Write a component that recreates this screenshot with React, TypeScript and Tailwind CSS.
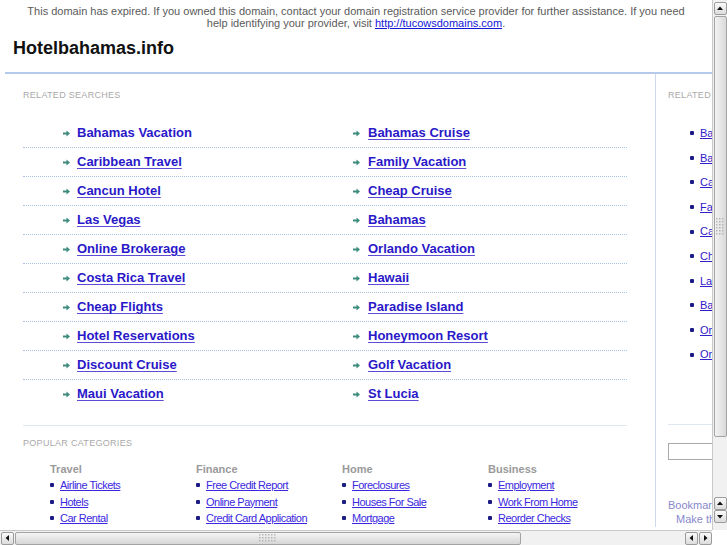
import React from "react";

const leftLinks = [
  "Bahamas Vacation",
  "Caribbean Travel",
  "Cancun Hotel",
  "Las Vegas",
  "Online Brokerage",
  "Costa Rica Travel",
  "Cheap Flights",
  "Hotel Reservations",
  "Discount Cruise",
  "Maui Vacation",
];
const rightLinks = [
  "Bahamas Cruise",
  "Family Vacation",
  "Cheap Cruise",
  "Bahamas",
  "Orlando Vacation",
  "Hawaii",
  "Paradise Island",
  "Honeymoon Resort",
  "Golf Vacation",
  "St Lucia",
];
const sideLinks = [
  "Bahamas Vacation",
  "Bahamas Cruise",
  "Caribbean Travel",
  "Family Vacation",
  "Cancun Hotel",
  "Cheap Cruise",
  "Las Vegas",
  "Bahamas",
  "Online Brokerage",
  "Orlando Vacation",
];
const categories = [
  { title: "Travel", items: ["Airline Tickets", "Hotels", "Car Rental"] },
  { title: "Finance", items: ["Free Credit Report", "Online Payment", "Credit Card Application"] },
  { title: "Home", items: ["Foreclosures", "Houses For Sale", "Mortgage"] },
  { title: "Business", items: ["Employment", "Work From Home", "Reorder Checks"] },
];

function Arrow() {
  return (
    <svg width="7" height="7" viewBox="0 0 7 7" className="shrink-0">
      <path d="M0 2.5h3.5V0.5L7 3.5 3.5 6.5V4.5H0z" fill="#3d8c7e" />
    </svg>
  );
}

function Bullet() {
  return <span className="inline-block w-[4px] h-[4px] rounded-[1px] bg-[#1c1c86] shrink-0" />;
}

function Tri({ dir }: { dir: "up" | "down" | "left" | "right" }) {
  const d =
    dir === "up"
      ? "M1 5L4 1.5 7 5z"
      : dir === "down"
      ? "M1 2L4 5.5 7 2z"
      : dir === "left"
      ? "M5 1L1.5 4 5 7z"
      : "M2 1L5.5 4 2 7z";
  return (
    <svg width="8" height="8" viewBox="0 0 8 8">
      <path d={d} fill="#111" />
    </svg>
  );
}

function Btn({ dir, cls }: { dir: "up" | "down" | "left" | "right"; cls: string }) {
  return (
    <div
      className={`${cls} flex items-center justify-center rounded-[2px] border border-[#9c9c9c] bg-gradient-to-b from-[#fafafa] to-[#dcdcdc]`}
    >
      <Tri dir={dir} />
    </div>
  );
}

function Grip({ vertical }: { vertical: boolean }) {
  const cols = vertical ? 3 : 6;
  const rows = vertical ? 6 : 3;
  const dots = [];
  for (let r = 0; r < rows; r++)
    for (let c = 0; c < cols; c++)
      dots.push(<rect key={`${r}-${c}`} x={c * 3} y={r * 3} width="1.5" height="1.5" fill="#b5b5b5" />);
  return (
    <svg width={cols * 3} height={rows * 3}>
      {dots}
    </svg>
  );
}

function VScroll() {
  return (
    <div className="w-[15px] h-full flex flex-col items-center bg-[#f1f1f1] border-l border-[#c9c9c9]">
      <Btn dir="up" cls="w-[13px] h-[13px] mt-[2px]" />
      <div className="w-[13px] h-[421px] mt-[1px] flex items-center justify-center rounded-[2px] border border-[#a3a3a3] bg-gradient-to-r from-[#f3f3f3] to-[#d9d9d9]">
        <Grip vertical />
      </div>
      <div className="flex-1" />
      <Btn dir="up" cls="w-[13px] h-[13px]" />
      <Btn dir="down" cls="w-[13px] h-[13px]" />
      <div className="h-[7px]" />
    </div>
  );
}

function HScroll() {
  return (
    <div className="flex-1 h-full flex items-center bg-[#f1f1f1] border-t border-[#c9c9c9]">
      <Btn dir="left" cls="w-[13px] h-[13px] ml-[1px]" />
      <div className="w-[506px] h-[13px] ml-[1px] flex items-center justify-center rounded-[2px] border border-[#a3a3a3] bg-gradient-to-b from-[#f5f5f5] to-[#d6d6d6]">
        <Grip vertical={false} />
      </div>
      <div className="flex-1" />
      <Btn dir="left" cls="w-[13px] h-[13px]" />
      <Btn dir="right" cls="w-[13px] h-[13px] ml-[1px]" />
    </div>
  );
}

function RelLink({ text, first }: { text: string; first?: boolean }) {
  return (
    <a
      href="#"
      className={`text-[13px] font-bold text-[#2a18c8] ${
        first ? "no-underline" : "underline decoration-[#5b4bd6] underline-offset-[2px]"
      }`}
    >
      {text}
    </a>
  );
}

export default function App() {
  return (
    <div className="w-[727px] h-[545px] flex flex-col overflow-hidden bg-white font-['Liberation_Sans',Arial,sans-serif]">
      <div className="flex flex-1 min-h-0">
        <div className="flex-1 min-w-0 overflow-hidden">
          <div className="w-[960px]">
            <div className="w-[712px] pt-[5px] text-center text-[11px] leading-[12px] text-[#5a5a5a]">
              This domain has expired. If you owned this domain, contact your domain registration service provider for further assistance. If you need
              <br />
              help identifying your provider, visit{" "}
              <a href="#" className="text-[#1515d8] underline">
                http://tucowsdomains.com
              </a>
              .
            </div>
            <h1 className="mt-[8px] ml-[13px] text-[18px] leading-[22px] font-bold text-[#111]">
              Hotelbahamas.info
            </h1>
            <div className="mt-[13px] ml-[5px] h-[2px] bg-[#b5c9ea]" />
            <div className="flex ml-[5px]">
              <div className="w-[651px] border-r border-[#cdd8ea] pl-[18px] pr-[28px] pt-[16px]">
                <div className="text-[9px] leading-[11px] text-[#a9a9a9] tracking-[0.3px]">RELATED SEARCHES</div>
                <div className="mt-[18px]">
                  {leftLinks.map((l, i) => (
                    <div
                      key={l}
                      className={`grid grid-cols-[290px_1fr] h-[29px] ${
                        i < leftLinks.length - 1 ? "border-b border-dotted border-[#a9c3e6]" : ""
                      }`}
                    >
                      <div className="pl-[40px] flex items-center gap-[7px] h-[28px]">
                        <Arrow />
                        <RelLink text={l} first={i === 0} />
                      </div>
                      <div className="pl-[40px] flex items-center gap-[8px] h-[28px]">
                        <Arrow />
                        <RelLink text={rightLinks[i]} />
                      </div>
                    </div>
                  ))}
                </div>
                <div className="mt-[16px] h-[1px] bg-[#dfe7f3]" />
                <div className="mt-[12px] text-[9px] leading-[11px] text-[#a9a9a9] tracking-[0.3px]">POPULAR CATEGORIES</div>
                <div className="mt-[14px] pl-[27px] flex">
                  {categories.map((c) => (
                    <div key={c.title} className="w-[146px] shrink-0">
                      <div className="text-[11px] leading-[13px] font-bold text-[#9a9a9a]">{c.title}</div>
                      <div className="mt-[1px]">
                        {c.items.map((it) => (
                          <div
                            key={it}
                            className="flex items-center gap-[6px] h-[16.5px] text-[11px] whitespace-nowrap tracking-[-0.5px]"
                          >
                            <Bullet />
                            <a href="#" className="text-[#3a28e0] underline">
                              {it}
                            </a>
                          </div>
                        ))}
                      </div>
                    </div>
                  ))}
                </div>
              </div>
              <div className="w-[240px] pt-[16px] pl-[12px]">
                <div className="text-[9px] leading-[11px] text-[#a9a9a9] tracking-[0.3px]">RELATED SEARCHES</div>
                <div className="mt-[20px] pl-[22px]">
                  {sideLinks.map((l) => (
                    <div key={l} className="h-[24.6px] flex items-center gap-[6px] text-[11px]">
                      <Bullet />
                      <a href="#" className="text-[#2f20c8] underline">
                        {l}
                      </a>
                    </div>
                  ))}
                </div>
                <div className="mt-[57px] h-[1px] bg-[#dfe7f3]" />
                <div className="mt-[18px] w-[160px] h-[17px] border border-[#aaaaaa]" />
                <div className="mt-[39px] text-[11px] leading-[13px] text-[#8888cc]">Bookmark this page</div>
                <div className="mt-[1px] ml-[8px] text-[11px] leading-[13px] text-[#8888cc]">Make this your homepage</div>
              </div>
            </div>
          </div>
        </div>
        <VScroll />
      </div>
      <div className="flex h-[15px]">
        <HScroll />
        <div className="w-[15px] h-full bg-white" />
      </div>
    </div>
  );
}
